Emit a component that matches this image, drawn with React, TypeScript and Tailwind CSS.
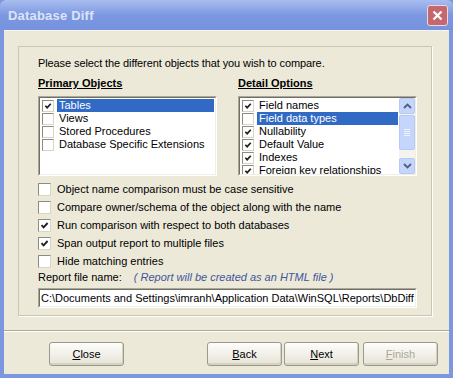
import React from 'react';

const font = { fontFamily: '"Liberation Sans", Arial, sans-serif' };

function Check({ size = 13 }: { size?: number }) {
  return (
    <svg width={size - 4} height={size - 4} viewBox="0 0 9 9" className="block">
      <polyline points="1.5,4.2 3.6,6.4 7.6,2" fill="none" stroke="#21211d" strokeWidth="1.9" />
    </svg>
  );
}

function Box({ checked, small }: { checked?: boolean; small?: boolean }) {
  return (
    <span
      className={`flex items-center justify-center bg-white border border-t-[#8e8c80] border-l-[#8e8c80] border-b-[#d8d5c6] border-r-[#d8d5c6] shrink-0 ${
        small ? 'w-[12px] h-[12px]' : 'w-[13px] h-[13px]'
      }`}
    >
      {checked && <Check size={small ? 12 : 13} />}
    </span>
  );
}

function ListRow({ label, checked, selected }: { label: string; checked?: boolean; selected?: boolean }) {
  return (
    <div className="flex items-center h-[13px]">
      <span className="ml-[2px]">
        <Box checked={checked} small />
      </span>
      <span
        className={`ml-[3px] flex-1 h-[13px] leading-[13px] pl-[2px] whitespace-nowrap ${
          selected ? 'bg-[#316ac5] text-white' : 'text-black'
        }`}
      >
        {label}
      </span>
    </div>
  );
}

function Sunken({ children, className = '' }: { children: React.ReactNode; className?: string }) {
  return (
    <div className={`border border-t-[#aca899] border-l-[#aca899] border-b-white border-r-white ${className}`}>
      <div className="h-full border border-t-[#716f64] border-l-[#716f64] border-b-[#f1efe2] border-r-[#f1efe2] bg-white overflow-hidden">
        {children}
      </div>
    </div>
  );
}

function Arrow({ up }: { up?: boolean }) {
  return (
    <svg width="9" height="6" viewBox="0 0 9 6">
      <polyline
        points={up ? '1,5 4.5,1.5 8,5' : '1,1 4.5,4.5 8,1'}
        fill="none"
        stroke="#4d6185"
        strokeWidth="1.8"
      />
    </svg>
  );
}

function OptionRow({ label, checked }: { label: string; checked?: boolean }) {
  return (
    <div className="flex items-center h-[18px]">
      <Box checked={checked} />
      <span className="ml-[6px] whitespace-nowrap">{label}</span>
    </div>
  );
}

function Button({ label, mnemonic, disabled, className = '' }: { label: string; mnemonic: number; disabled?: boolean; className?: string }) {
  return (
    <div
      className={`w-[75px] h-[24px] rounded-[3px] border border-[#9b998b] bg-gradient-to-b from-[#fdfdfb] to-[#e6e3d6] shadow-[inset_-1px_-2px_0_#d6d2c2] flex items-center justify-center ${
        disabled ? 'text-[#aca899]' : 'text-black'
      } ${className}`}
    >
      <span>
        <span className="underline underline-offset-1">{label.slice(0, mnemonic + 1)}</span>
        {label.slice(mnemonic + 1)}
      </span>
    </div>
  );
}

export default function App() {
  return (
    <div className="w-[453px] h-[378px] bg-[#7b97e0] flex flex-col text-[11px] leading-[13px]" style={font}>
      {/* Title bar */}
      <div className="h-[30px] shrink-0 flex items-center justify-between pl-[8px] pr-[5px] bg-gradient-to-b from-[#a9bdf0] via-[#7d98e1] to-[#7792de] rounded-t-[6px]">
        <span className="text-[13px] font-bold text-[#dbe4f8] tracking-[0.2px]">Database Diff</span>
        <div className="w-[21px] h-[21px] rounded-[3px] border border-[#f0d8da] bg-[#c5676f] flex items-center justify-center">
          <svg width="11" height="11" viewBox="0 0 11 11">
            <path d="M1.5 1.5 L9.5 9.5 M9.5 1.5 L1.5 9.5" stroke="white" strokeWidth="2.2" />
          </svg>
        </div>
      </div>

      {/* Client area */}
      <div className="flex-1 mx-[4px] mb-[4px] bg-[#ece9d8] flex flex-col border-t border-[#f7f6ee]">
        <div className="ml-[14px] mt-[15px] w-[414px] h-[270px] border border-[#c9c6b6] shadow-[1px_1px_0_#ffffff] pl-[19px] pt-[10px]">
          <div className="tracking-[-0.1px]">Please select the different objects that you wish to compare.</div>

          <div className="flex mt-[7px] font-bold underline underline-offset-1">
            <span className="w-[200px]">Primary Objects</span>
            <span>Detail Options</span>
          </div>

          <div className="flex mt-[6px]">
            <Sunken className="w-[179px] h-[80px]">
              <div className="pt-[1px] pr-[1px]">
                <ListRow label="Tables" checked selected />
                <ListRow label="Views" />
                <ListRow label="Stored Procedures" />
                <ListRow label="Database Specific Extensions" />
              </div>
            </Sunken>
            <Sunken className="w-[179px] h-[80px] ml-[21px]">
              <div className="flex h-full">
                <div className="flex-1 pt-[1px] pr-[1px] overflow-hidden">
                  <ListRow label="Field names" checked />
                  <ListRow label="Field data types" selected />
                  <ListRow label="Nullability" checked />
                  <ListRow label="Default Value" checked />
                  <ListRow label="Indexes" checked />
                  <ListRow label="Foreign key relationships" checked />
                </div>
                <div className="w-[16px] h-full bg-[#f4f3ee] flex flex-col">
                  <div className="h-[16px] rounded-[2px] border border-[#b7c8f4] bg-[#c6d5fb] flex items-center justify-center">
                    <Arrow up />
                  </div>
                  <div className="mt-[1px] h-[35px] rounded-[2px] border border-[#b7c8f4] bg-[#c6d5fb] flex flex-col items-center justify-center gap-[1px]">
                    <span className="w-[6px] h-[1px] bg-[#eef2fd]" />
                    <span className="w-[6px] h-[1px] bg-[#eef2fd]" />
                    <span className="w-[6px] h-[1px] bg-[#eef2fd]" />
                    <span className="w-[6px] h-[1px] bg-[#eef2fd]" />
                  </div>
                  <div className="flex-1" />
                  <div className="h-[16px] rounded-[2px] border border-[#b7c8f4] bg-[#c6d5fb] flex items-center justify-center">
                    <Arrow />
                  </div>
                </div>
              </div>
            </Sunken>
          </div>

          <div className="mt-[4px]">
            <OptionRow label="Object name comparison must be case sensitive" />
            <OptionRow label="Compare owner/schema of the object along with the name" />
            <OptionRow label="Run comparison with respect to both databases" checked />
            <OptionRow label="Span output report to multiple files" checked />
            <OptionRow label="Hide matching entries" />
          </div>

          <div className="flex mt-[1px] h-[13px]">
            <span>Report file name:</span>
            <span className="ml-[12px] italic text-[#42559b]">( Report will be created as an HTML file )</span>
          </div>

          <Sunken className="mt-[4px] w-[379px] h-[20px]">
            <div className="pl-[1px] pt-[2px] whitespace-nowrap">
              C:\Documents and Settings\imranh\Application Data\WinSQL\Reports\DbDiff
            </div>
          </Sunken>
        </div>

        {/* Separator */}
        <div className="mt-[14px] h-[1px] bg-[#aca899]" />
        <div className="h-[1px] bg-white" />

        {/* Buttons */}
        <div className="flex mt-[10px]">
          <Button label="Close" mnemonic={0} className="ml-[45px]" />
          <Button label="Back" mnemonic={0} className="ml-[83px]" />
          <Button label="Next" mnemonic={0} className="ml-[2px]" />
          <Button label="Finish" mnemonic={0} disabled className="ml-[4px]" />
        </div>
      </div>
    </div>
  );
}
